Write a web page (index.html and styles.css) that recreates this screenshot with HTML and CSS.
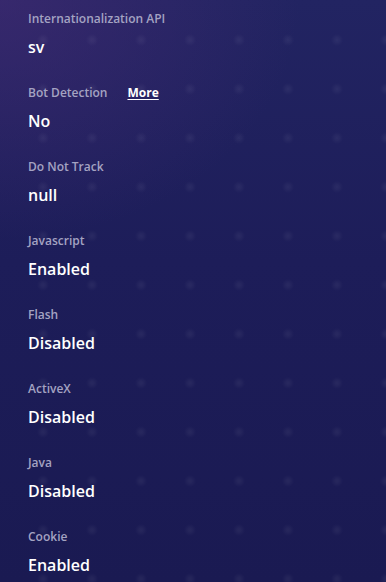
FILE: index.html
```html
<!DOCTYPE html>
<html lang="en">
<head>
<meta charset="utf-8">
<title>Browser details</title>
<link rel="stylesheet" href="styles.css">
</head>
<body>
<main class="panel">
  <div class="item">
    <div class="label">Internationalization API</div>
    <div class="value">sv</div>
  </div>
  <div class="item">
    <div class="label">Bot Detection <a class="more" href="#">More</a></div>
    <div class="value">No</div>
  </div>
  <div class="item">
    <div class="label">Do Not Track</div>
    <div class="value">null</div>
  </div>
  <div class="item">
    <div class="label">Javascript</div>
    <div class="value">Enabled</div>
  </div>
  <div class="item">
    <div class="label">Flash</div>
    <div class="value">Disabled</div>
  </div>
  <div class="item">
    <div class="label">ActiveX</div>
    <div class="value">Disabled</div>
  </div>
  <div class="item">
    <div class="label">Java</div>
    <div class="value">Disabled</div>
  </div>
  <div class="item">
    <div class="label">Cookie</div>
    <div class="value">Enabled</div>
  </div>
</main>
</body>
</html>
```
FILE: styles.css
```css
html, body {
  margin: 0;
  padding: 0;
  height: 100%;
}
body {
  width: 386px;
  height: 582px;
  overflow: hidden;
  font-family: "Open Sans", "Noto Sans", sans-serif;
  background-color: #1d1c56;
  background-image:
    radial-gradient(circle, rgba(255,255,255,0.055) 0, rgba(255,255,255,0.03) 3px, rgba(255,255,255,0) 6px),
    radial-gradient(ellipse 300px 240px at 0 0, rgba(72,44,118,0.55), rgba(72,44,118,0) 100%),
    linear-gradient(180deg, #222462 0%, #1d1d59 45%, #1a1a52 100%);
  background-size: 49px 49px, 100% 100%, 100% 100%;
  background-position: 18.5px 15.5px, 0 0, 0 0;
}
.panel {
  display: flex;
  flex-direction: column;
  padding: 10px 0 0 28px;
}
.item {
  display: flex;
  flex-direction: column;
  height: 74px;
}
.label {
  display: flex;
  align-items: center;
  gap: 20px;
  font-size: 12px;
  font-weight: 600;
  line-height: 18px;
  color: #a4a3c2;
}
.more {
  color: #ffffff;
  font-weight: 700;
  text-decoration: underline;
  text-underline-offset: 2px;
}
.value {
  margin-top: 7px;
  font-size: 16px;
  font-weight: 600;
  line-height: 24px;
  color: #ffffff;
}
```
